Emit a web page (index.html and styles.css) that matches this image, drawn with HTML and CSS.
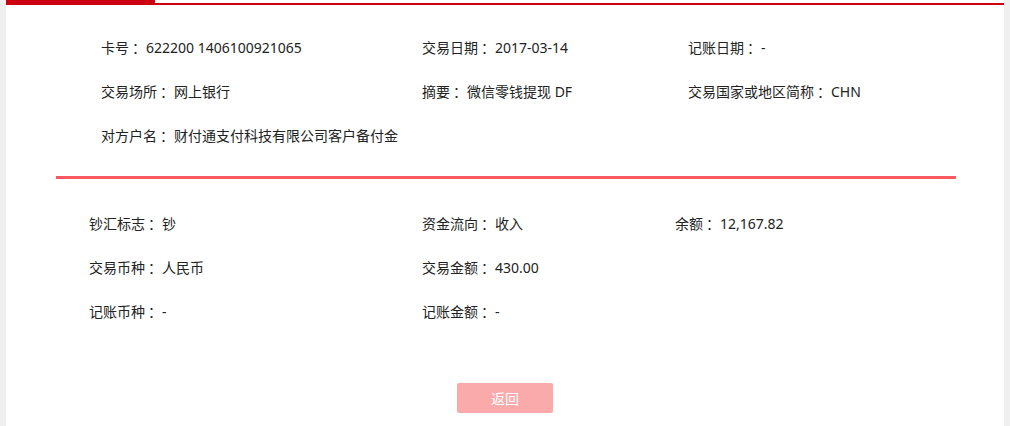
FILE: index.html
```html
<!DOCTYPE html>
<html lang="zh-CN">
<head>
    <meta charset="UTF-8">
    <title>交易明细</title>
    <link rel="stylesheet" href="styles.css">
</head>
<body>
    <div class="panel">
        <div class="top-bar"><span class="tab"></span></div>

        <div class="info info-main">
            <div class="item">卡号<i>：</i>622200 1406100921065</div>
            <div class="item">交易日期<i>：</i>2017-03-14</div>
            <div class="item">记账日期<i>：</i>-</div>
            <div class="item">交易场所<i>：</i>网上银行</div>
            <div class="item">摘要<i>：</i>微信零钱提现 DF</div>
            <div class="item">交易国家或地区简称<i>：</i>CHN</div>
            <div class="item">对方户名<i>：</i>财付通支付科技有限公司客户备付金</div>
        </div>

        <div class="divider"></div>

        <div class="info info-amount">
            <div class="item">钞汇标志<i>：</i>钞</div>
            <div class="item">资金流向<i>：</i>收入</div>
            <div class="item">余额<i>：</i>12,167.82</div>
            <div class="item">交易币种<i>：</i>人民币</div>
            <div class="item">交易金额<i>：</i>430.00</div>
            <div class="item"></div>
            <div class="item">记账币种<i>：</i>-</div>
            <div class="item">记账金额<i>：</i>-</div>
        </div>

        <div class="actions">
            <button class="back" id="back-btn">返回</button>
        </div>
    </div>
</body>
</html>
```

FILE: styles.css
```css
* {
  margin: 0;
  padding: 0;
  box-sizing: border-box;
}
body {
  font-family: "Noto Sans", "Noto Sans CJK SC", sans-serif;
  font-size: 14px;
  color: #222;
  background-color: #f0f0f0;
  height: 426px;
  overflow: hidden;
}
.panel {
  margin: 0 6px;
  height: 426px;
  background-color: #fff;
}
.top-bar {
  height: 5px;
  border-bottom: 2px solid #cc0011;
}
.tab {
  display: block;
  width: 149px;
  height: 5px;
  background-color: #cc0011;
}

.info {
  display: grid;
  grid-auto-rows: 44px;
  line-height: 44px;
}
.info-main {
  padding: 20px 0 0 95px;
  grid-template-columns: 321px 266px 1fr;
}
.info-amount {
  padding: 22px 0 0 83px;
  grid-template-columns: 333px 253px 1fr;
}
.item {
  white-space: nowrap;
}
/* full-width colon, pushed to the middle of its cell */
.item i {
  display: inline-block;
  width: 17px;
  padding-left: 3px;
  font-style: normal;
  font-family: "Noto Sans CJK SC", sans-serif;
}

.divider {
  margin: 19px 0 0 50px;
  width: 900px;
  height: 3px;
  background-color: #fa5a5f;
}

.actions {
  display: flex;
  justify-content: center;
  padding-top: 50px;
}
.back {
  width: 96px;
  height: 30px;
  border: none;
  border-radius: 2px;
  background-color: #fbaaac;
  color: #fff;
  font-family: inherit;
  font-size: 14px;
  cursor: pointer;
}
```
